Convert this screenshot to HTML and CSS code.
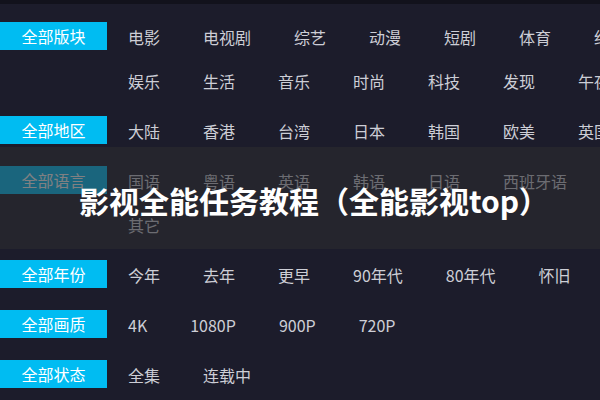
FILE: index.html
```html
<!DOCTYPE html>
<html lang="zh-CN">
<head>
<meta charset="utf-8">
<title>影视全能任务教程</title>
<link rel="stylesheet" href="styles.css">
</head>
<body>
<div class="topbar"></div>
<div class="filters">
  <div class="section">
    <div class="label">全部版块</div>
    <div class="items">
      <span>电影</span><span>电视剧</span><span>综艺</span><span>动漫</span><span>短剧</span><span>体育</span><span>纪录片</span>
      <span>娱乐</span><span>生活</span><span>音乐</span><span>时尚</span><span>科技</span><span>发现</span><span>午夜</span>
    </div>
  </div>
  <div class="section">
    <div class="label">全部地区</div>
    <div class="items">
      <span>大陆</span><span>香港</span><span>台湾</span><span>日本</span><span>韩国</span><span>欧美</span><span>英国</span>
    </div>
  </div>
  <div class="section">
    <div class="label">全部语言</div>
    <div class="items">
      <span>国语</span><span>粤语</span><span>英语</span><span>韩语</span><span>日语</span><span>西班牙语</span><span>法语</span>
      <span>其它</span>
    </div>
  </div>
  <div class="section">
    <div class="label">全部年份</div>
    <div class="items">
      <span>今年</span><span>去年</span><span>更早</span><span>90年代</span><span>80年代</span><span>怀旧</span>
    </div>
  </div>
  <div class="section">
    <div class="label">全部画质</div>
    <div class="items">
      <span>4K</span><span>1080P</span><span>900P</span><span>720P</span>
    </div>
  </div>
  <div class="section">
    <div class="label">全部状态</div>
    <div class="items">
      <span>全集</span><span>连载中</span>
    </div>
  </div>
</div>
<div class="banner">
  <h1 class="title">影视全能任务教程（全能影视top）</h1>
</div>
</body>
</html>
```

FILE: styles.css
```css
html, body {
  margin: 0;
  padding: 0;
}
body {
  width: 600px;
  height: 400px;
  overflow: hidden;
  position: relative;
  background: #1c1c2b;
  font-family: "Noto Sans CJK SC", "Noto Sans", sans-serif;
}
.topbar {
  height: 4px;
  background: #12121c;
}
.filters {
  width: 680px;
  padding-top: 18px;
}
.section {
  display: flex;
  align-items: flex-start;
  margin-bottom: 22px;
}
.label {
  flex: 0 0 107px;
  height: 28px;
  line-height: 28px;
  background: #00bcf2;
  color: #ffffff;
  font-size: 16px;
  text-align: center;
  margin-right: 21px;
}
.items {
  flex: 1;
  display: flex;
  flex-wrap: wrap;
  column-gap: 43px;
  row-gap: 16px;
}
.items span {
  font-size: 16px;
  line-height: 30px;
  height: 28px;
  color: #cdced6;
  white-space: nowrap;
}
.banner {
  position: absolute;
  left: 0;
  right: 0;
  top: 147px;
  height: 102px;
  background: rgba(44, 44, 46, 0.6);
  display: flex;
  align-items: center;
  justify-content: center;
  padding-top: 4px;
  box-sizing: border-box;
}
.title {
  margin: 0 0 0 28px;
  color: #ffffff;
  font-size: 30px;
  font-weight: 700;
  line-height: 36px;
  white-space: nowrap;
}
```
